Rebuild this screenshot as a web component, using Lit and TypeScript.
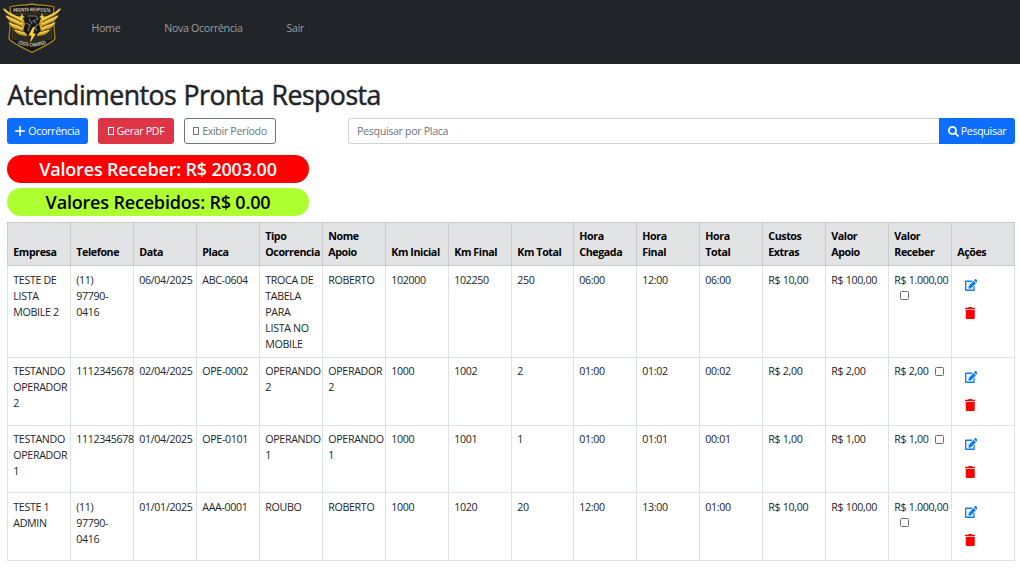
import { LitElement, html, css, svg } from "lit";
import { customElement } from "lit/decorators.js";

interface Ocorrencia {
  empresa: string;
  telefone: string;
  data: string;
  placa: string;
  tipo: string;
  apoio: string;
  kmInicial: string;
  kmFinal: string;
  kmTotal: string;
  chegada: string;
  final: string;
  total: string;
  custos: string;
  valorApoio: string;
  valorReceber: string;
}

const COLUNAS = [
  "Empresa", "Telefone", "Data", "Placa", "Tipo\nOcorrencia", "Nome\nApoio",
  "Km Inicial", "Km Final", "Km Total", "Hora\nChegada", "Hora\nFinal",
  "Hora\nTotal", "Custos\nExtras", "Valor\nApoio", "Valor\nReceber", "Ações",
];

const OCORRENCIAS: Ocorrencia[] = [
  { empresa: "TESTE DE\nLISTA\nMOBILE 2", telefone: "(11)\n97790-\n0416", data: "06/04/2025", placa: "ABC-0604", tipo: "TROCA DE\nTABELA\nPARA\nLISTA NO\nMOBILE", apoio: "ROBERTO", kmInicial: "102000", kmFinal: "102250", kmTotal: "250", chegada: "06:00", final: "12:00", total: "06:00", custos: "R$ 10,00", valorApoio: "R$ 100,00", valorReceber: "R$ 1.000,00\n" },
  { empresa: "TESTANDO\nOPERADOR\n2", telefone: "1112345678", data: "02/04/2025", placa: "OPE-0002", tipo: "OPERANDO\n2", apoio: "OPERADOR\n2", kmInicial: "1000", kmFinal: "1002", kmTotal: "2", chegada: "01:00", final: "01:02", total: "00:02", custos: "R$ 2,00", valorApoio: "R$ 2,00", valorReceber: "R$ 2,00" },
  { empresa: "TESTANDO\nOPERADOR\n1", telefone: "1112345678", data: "01/04/2025", placa: "OPE-0101", tipo: "OPERANDO\n1", apoio: "OPERANDO\n1", kmInicial: "1000", kmFinal: "1001", kmTotal: "1", chegada: "01:00", final: "01:01", total: "00:01", custos: "R$ 1,00", valorApoio: "R$ 1,00", valorReceber: "R$ 1,00" },
  { empresa: "TESTE 1\nADMIN", telefone: "(11)\n97790-\n0416", data: "01/01/2025", placa: "AAA-0001", tipo: "ROUBO", apoio: "ROBERTO", kmInicial: "1000", kmFinal: "1020", kmTotal: "20", chegada: "12:00", final: "13:00", total: "01:00", custos: "R$ 10,00", valorApoio: "R$ 100,00", valorReceber: "R$ 1.000,00\n" },
];

@customElement("brand-logo")
export class BrandLogo extends LitElement {
  static styles = css`
    :host { display: block; width: 60px; height: 52px; }
    .logo { display: block; width: 60px; height: 52px; }
    .txt { font: 700 5.2px "Liberation Sans", sans-serif; fill: #d8d2bd; text-anchor: middle; letter-spacing: 0; }
  `;
  // One wing is drawn and mirrored for the other side.
  private wing() {
    return svg`
      <path d="M0.5 5C4 11 12 14 20 15L23 20L25 34C17 34 13 30 11 27C14 29 16 29 17 28C11 27 8 24 6 20C9 22 12 23 14 22C8 20 5 17 3 13C6 15 9 16 12 16C6 13 2 10 0.5 5Z" fill="#cfa023"/>
      <path d="M2 7C7 12 13 14 20 18M5 14C9 18 14 18 20 22M8 21C12 24 16 24 21 27M13 28C16 30 19 30 23 31" fill="none" stroke="#f9dc63" stroke-width="1.4"/>
      <path d="M6 13C10 16 14 16 19 20M9 20C12 22 15 22 20 25M13 27C15 28 18 28 21 30" fill="none" stroke="#4a380d" stroke-width=".8"/>`;
  }
  render() {
    return html`<svg class="logo" viewBox="0 0 60 52">
      <path d="M8 5C15 3 23 3.5 30 2C37 3.5 45 3 52 5L51 13L53 37C47 43 38 46 30 50.5C22 46 13 43 7 37L9 13Z" fill="#15171a" stroke="#a98220" stroke-width="1.3"/>
      <path d="M11 12L30 10L49 12L50 36L30 44L10 36Z" fill="#2b2a24" stroke="#6b5418" stroke-width=".7"/>
      ${this.wing()}
      <g transform="translate(60 0) scale(-1 1)">${this.wing()}</g>
      <path d="M21 14L25 13L30 14L35 13L39 14L37 22L39 29L34 33L30 30L26 33L21 29L23 22Z" fill="#17181a"/>
      <path d="M25 14H34L36 17L31 19L34 21M24 21L28 23L26 29M36 22L33 25L35 29M27 17L30 22" fill="none" stroke="#77766f" stroke-width="1.1"/>
      <path d="M20 11L21 14L23 15L21 16L20 19L19 16L17 15L19 14ZM40 11L41 14L43 15L41 16L40 19L39 16L37 15L39 14Z" fill="#e8c443"/>
      <path d="M31 25L26.5 33.5H29.5L28 41L34 31.5H31L33 25Z" fill="#ffd23b"/>
      <path id="top" d="M10 10.5Q30 8 50 10.5" fill="none"/>
      <path id="bottom" d="M14 41Q30 48 46 41" fill="none"/>
      <path d="M10 6Q30 4 50 6L49 11.500Q30 9.500 11 11.500Z" fill="#17191b"/>
      <path d="M14 37.5Q30 44 46 37.5L46 41Q38 44 30 48Q22 44 14 41Z" fill="#17191b"/>
      <text class="txt"><textPath href="#top" startOffset="50%" textLength="37" lengthAdjust="spacingAndGlyphs">PRONTA RESPOSTA</textPath></text>
      <text class="txt"><textPath href="#bottom" startOffset="50%" textLength="29" lengthAdjust="spacingAndGlyphs">COSTA CAMARGO</textPath></text>
    </svg>`;
  }
}

@customElement("app-root")
export class AppRoot extends LitElement {
  static styles = css`
    :host {
      display: block; width: 1020px; height: 584px; overflow: hidden; background: #fff;
      font-family: "Open Sans", "Noto Sans", sans-serif; font-size: 10.67px; line-height: 16px;
      letter-spacing: -0.33px; color: #212529;
    }
    * { box-sizing: border-box; }
    .nav { height: 64px; background: #212529; display: flex; padding: 2px 2px 0; }
    .links { display: flex; padding: 18px 0 0 29.5px; gap: 44px; }
    .link { color: #9b9d9f; white-space: nowrap; }
    .title { margin: 0; padding: 15px 7px 0 7.5px; height: 54px; font-size: 26.67px; line-height: 32px; font-weight: 400; letter-spacing: -0.52px; word-spacing: 1px; -webkit-text-stroke: 0.5px #212529; white-space: nowrap; }
    .bar { display: flex; padding: 0 5px 0 7px; height: 26px; }
    .btn { height: 26px; display: flex; align-items: center; justify-content: center; gap: 3px; border-radius: 3px; color: #fff; white-space: nowrap; }
    .add { width: 81px; background: #0d6efd; margin-right: 10px; }
    .pdf { width: 76px; background: #dc3545; margin-right: 10px; }
    .period { width: 92px; border: 1px solid #6c757d; color: #6c757d; margin-right: 72px; }
    .tofu { width: 6px; height: 8px; border: 1px solid currentColor; }
    .field { flex: 1; height: 26px; border: 1px solid #ced4da; border-right: 0; border-radius: 3px 0 0 3px; padding: 4px 8px; color: #6c757d; }
    .search { width: 76px; background: #0d6efd; border-radius: 0 3px 3px 0; gap: 2px; }
    .icon { display: block; fill: currentColor; flex: none; }
    .pills { padding: 11px 7px 0; display: grid; gap: 5px; }
    .pill { width: 302px; height: 28px; border-radius: 14px; font-size: 18px; line-height: 28px; font-weight: 600; text-align: center; white-space: nowrap; letter-spacing: -0.18px; }
    .red { background: #f00; color: #fff; }
    .green { background: #adff2f; color: #000; }
    .table { margin: 6px 0 0 7px; width: 1008px; table-layout: fixed; border-collapse: separate; border-spacing: 0; border-left: 1px solid #c9cacc; border-top: 1px solid #c9cacc; }
    .body .td:first-child { box-shadow: -1px 0 #dee2e6; }
    .col { width: 63px; }
    .col.narrow { width: 62px; }
    .th { height: 43px; padding: 5px 0 5px 5.25px; background: #e2e3e5; color: #000; font-weight: 700; text-align: left; vertical-align: bottom; white-space: pre; border-right: 1px solid #c9cacc; border-bottom: 1px solid #c9cacc; letter-spacing: -0.4px; }
    .td { padding: 6px 0 0 5.25px; vertical-align: top; white-space: pre; border-right: 1px solid #dee2e6; border-bottom: 1px solid #dee2e6; }
    .r1 .td, .r2 .td { padding-top: 5px; }
    .r0 { height: 92px; }
    .r1, .r3 { height: 68px; }
    .r2 { height: 67px; }
    .check { display: inline-block; width: 9px; height: 9px; border: 1px solid #6d6d6d; border-radius: 1.5px; margin: 0 0 0 7px; vertical-align: -0.5px; }
    .r0 .check, .r3 .check { margin-left: 6px; vertical-align: 0.5px; }
    .actions { display: grid; gap: 16px; padding: 8px 0 0 7.5px; white-space: normal; }
    .r0 .actions, .r2 .actions, .r3 .actions { padding-top: 7.4px; }
    .edit { color: #0d7dfd; }
    .trash { color: #f00; }
  `;

  private linha(o: Ocorrencia, i: number) {
    const valores = [o.empresa, o.telefone, o.data, o.placa, o.tipo, o.apoio, o.kmInicial, o.kmFinal, o.kmTotal, o.chegada, o.final, o.total, o.custos, o.valorApoio];
    return html`<tr class="r${i}">
      ${valores.map((v) => html`<td class="td">${v}</td>`)}
      <td class="td">${o.valorReceber}<span class="check"></span></td>
      <td class="td"><div class="actions">
        <svg class="icon edit" width="12.5" height="12" viewBox="0 0 576 512" preserveAspectRatio="none"><path d="M402.6 83.2l90.2 90.2c3.8 3.8 3.8 10 0 13.8L274.4 405.6l-92.8 10.3c-12.4 1.4-22.9-9.1-21.5-21.5l10.3-92.8L388.8 83.2c3.8-3.8 10-3.8 13.8 0zm162-22.9l-48.8-48.8c-15.2-15.2-39.9-15.2-55.2 0l-35.4 35.4c-3.8 3.8-3.8 10 0 13.8l90.2 90.2c3.8 3.8 10 3.8 13.8 0l35.4-35.4c15.2-15.3 15.2-40 0-55.2zM384 346.2V448H64V128h229.8c3.2 0 6.2-1.3 8.5-3.5l40-40c7.6-7.6 2.2-20.5-8.5-20.5H48C21.5 64 0 85.5 0 112v352c0 26.5 21.5 48 48 48h352c26.5 0 48-21.5 48-48V306.2c0-10.7-12.9-16-20.5-8.5l-40 40c-2.2 2.3-3.5 5.3-3.5 8.5z"/></svg>
        <svg class="icon trash" width="10.5" height="12" viewBox="0 0 448 512"><path d="M432 32H312l-9.4-18.7A24 24 0 0 0 281.1 0H166.8a23.72 23.72 0 0 0-21.4 13.3L136 32H16A16 16 0 0 0 0 48v32a16 16 0 0 0 16 16h416a16 16 0 0 0 16-16V48a16 16 0 0 0-16-16zM32 128V464a48 48 0 0 0 48 48H368a48 48 0 0 0 48-48V128z"/></svg>
      </div></td>
    </tr>`;
  }

  render() {
    return html`
      <nav class="nav">
        <brand-logo></brand-logo>
        <div class="links"><span class="link">Home</span><span class="link">Nova Ocorrência</span><span class="link">Sair</span></div>
      </nav>
      <h1 class="title">Atendimentos Pronta Resposta</h1>
      <div class="bar">
        <div class="btn add"><svg class="icon" width="10" height="10" viewBox="0 0 10 10"><path d="M4.2 .7a.8.8 0 0 1 1.6 0V4.2H9.3a.8.8 0 0 1 0 1.6H5.8V9.3a.8.8 0 0 1-1.6 0V5.8H.7a.8.8 0 0 1 0-1.6H4.2Z"/></svg><span>Ocorrência</span></div>
        <div class="btn pdf"><span class="tofu"></span><span>Gerar PDF</span></div>
        <div class="btn period"><span class="tofu"></span><span>Exibir Período</span></div>
        <div class="field">Pesquisar por Placa</div>
        <div class="btn search"><svg class="icon" width="11" height="11" viewBox="0 0 512 512"><path d="M505 442.7L405.3 343c-4.500-4.500-10.600-7-17-7H372c27.600-35.300 44-79.700 44-128C416 93.100 322.900 0 208 0S0 93.100 0 208s93.100 208 208 208c48.300 0 92.700-16.400 128-44v16.300c0 6.400 2.500 12.500 7 17l99.700 99.700c9.400 9.400 24.600 9.400 33.900 0l28.300-28.300c9.400-9.400 9.400-24.600.1-34zM208 336c-70.700 0-128-57.200-128-128 0-70.700 57.200-128 128-128 70.700 0 128 57.200 128 128 0 70.700-57.200 128-128 128z"/></svg><span>Pesquisar</span></div>
      </div>
      <div class="pills">
        <div class="pill red">Valores Receber: R$ 2003.00</div>
        <div class="pill green">Valores Recebidos: R$ 0.00</div>
      </div>
      <table class="table">
        <colgroup>${COLUNAS.map((_, i) => html`<col class="col ${i === 8 ? "narrow" : ""}">`)}</colgroup>
        <thead><tr>${COLUNAS.map((c) => html`<th class="th">${c}</th>`)}</tr></thead>
        <tbody class="body">${OCORRENCIAS.map((o, i) => this.linha(o, i))}</tbody>
      </table>`;
  }
}
